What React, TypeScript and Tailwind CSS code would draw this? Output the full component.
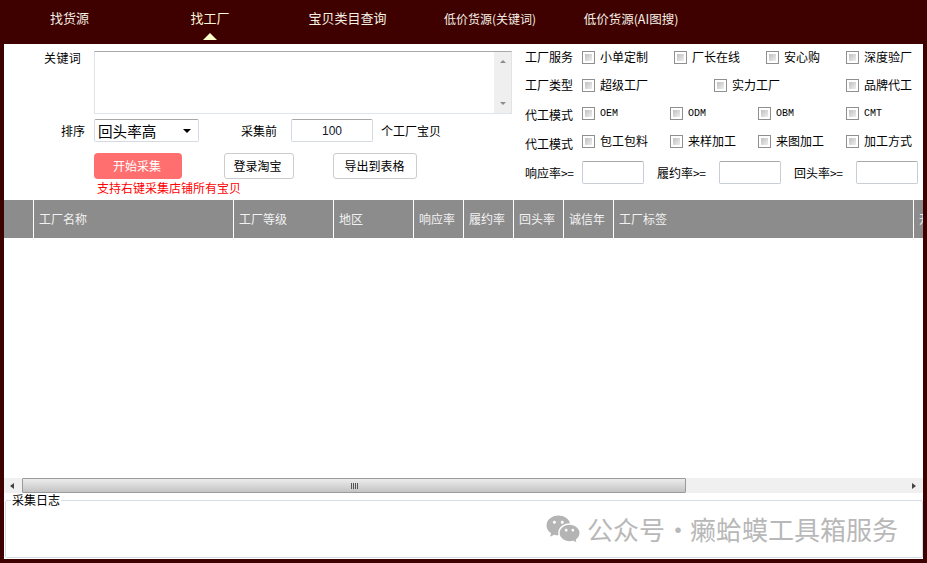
import { RiWechatFill } from "react-icons/ri";

const font = { fontFamily: '"Noto Sans CJK SC", "Liberation Sans", sans-serif' };

function Box() {
  return (
    <span className="w-[13px] h-[13px] shrink-0 border border-[#8e8f8f] bg-white p-[2px] flex">
      <span className="flex-1 bg-gradient-to-br from-[#c0c0c0] to-[#eeeeee]" />
    </span>
  );
}

function Check({ label, w, mono }: { label: string; w: string; mono?: boolean }) {
  return (
    <div className={`${w} flex items-center gap-[5px] shrink-0`}>
      <Box />
      <span className={mono ? "text-[10px] font-['Liberation_Mono']" : "text-[12px]"}>{label}</span>
    </div>
  );
}

function RowLabel({ children, cls = "" }: { children: string; cls?: string }) {
  return <span className={`w-[57px] shrink-0 text-[12px] ${cls}`}>{children}</span>;
}

function Rate({ label, w }: { label: string; w: string }) {
  return (
    <div className="flex items-center">
      <span className={`${w} shrink-0 text-[12px] whitespace-nowrap`}>
        {label}
        <span className="tracking-[-0.5px]">{">="}</span>
      </span>
      <div className="w-[62px] h-[23px] rounded-[2px] border border-[#c9ced6] border-t-[#a8a8a8] bg-white" />
    </div>
  );
}

const columns = [
  { w: "w-[30px]", t: "" },
  { w: "w-[200px]", t: "工厂名称" },
  { w: "w-[100px]", t: "工厂等级" },
  { w: "w-[80px]", t: "地区" },
  { w: "w-[50px]", t: "响应率" },
  { w: "w-[50px]", t: "履约率" },
  { w: "w-[50px]", t: "回头率" },
  { w: "w-[50px]", t: "诚信年" },
  { w: "w-[300px]", t: "工厂标签" },
  { w: "flex-1", t: "开" },
];

export default function App() {
  return (
    <div style={font} className="relative w-[927px] h-[563px] overflow-hidden bg-[#3f0000] text-black">
      <nav className="h-[44px] flex text-[13px] text-[#f4f0e4]">
        <div className="w-[139px] pt-[8px] text-center">找货源</div>
        <div className="w-[142px] pt-[8px] flex flex-col items-center">
          <span className="text-[#fff8d8]">找工厂</span>
          <span className="mt-[5px] w-0 h-0 border-l-[7px] border-r-[7px] border-b-[7px] border-l-transparent border-r-transparent border-b-[#ffffcc]" />
        </div>
        <div className="w-[133px] pt-[8px] text-center">宝贝类目查询</div>
        <div className="w-[152px] pt-[10px] text-center text-[12px]">低价货源(关键词)</div>
        <div className="w-[130px] pt-[10px] text-center text-[12.5px] leading-[18px]">低价货源(AI图搜)</div>
      </nav>

      <main className="mx-[4px] h-[515px] bg-white flex flex-col">
        <section className="h-[156px] flex">
          <div className="w-[521px] shrink-0 pt-[7px]">
            <div className="flex">
              <span className="w-[77px] text-right text-[12px] leading-[14px] tracking-[0.3px]">关键词</span>
              <div className="ml-[13px] w-[418px] h-[63px] border border-[#dfe3ea] border-t-[#a8a8a8] flex justify-end">
                <div className="w-[17px] bg-[#efefef] flex flex-col items-center justify-between py-[8px]">
                  <span className="w-0 h-0 border-l-[3px] border-r-[3px] border-b-[3px] border-l-transparent border-r-transparent border-b-[#8c8c8c]" />
                  <span className="w-0 h-0 border-l-[3px] border-r-[3px] border-t-[3px] border-l-transparent border-r-transparent border-t-[#8c8c8c]" />
                </div>
              </div>
            </div>
            <div className="mt-[5px] flex items-center h-[23px]">
              <span className="w-[81px] text-right text-[12px]">排序</span>
              <div className="ml-[9px] w-[105px] h-[23px] pl-[3px] pr-[7px] border border-[#d5dae2] border-t-[#a8a8a8] rounded-[2px] flex items-center justify-between text-[14.6px]">
                <span>回头率高</span>
                <span className="w-0 h-0 border-l-[4px] border-r-[4px] border-t-[4px] border-l-transparent border-r-transparent border-t-black" />
              </div>
              <span className="ml-[42px] text-[12px]">采集前</span>
              <div className="ml-[14px] w-[82px] h-[23px] border border-[#d5dae2] border-t-[#a8a8a8] rounded-[2px] flex items-center justify-center text-[12px] text-[#10182e] font-['Liberation_Sans']">100</div>
              <span className="ml-[8px] text-[12px]">个工厂宝贝</span>
            </div>
            <div className="mt-[11px] ml-[90px] flex items-center">
              <div className="w-[88px] h-[26px] pr-[2px] rounded-[4px] bg-[#ff6f6f] text-white text-[12px] flex items-center justify-center">开始采集</div>
              <div className="ml-[42px] w-[70px] h-[26px] pr-[3px] rounded-[3px] border border-[#cccccc] flex items-center justify-center text-[12px]">登录淘宝</div>
              <div className="ml-[39px] w-[84px] h-[26px] pr-[1px] rounded-[3px] border border-[#cccccc] flex items-center justify-center text-[12px]">导出到表格</div>
            </div>
            <div className="ml-[93px] mt-[1px] text-[12px] leading-[16px] text-[#ff0000]">支持右键采集店铺所有宝贝</div>
          </div>

          <div className="flex-1 pt-[6px] flex flex-col">
            <div className="h-[14px] flex items-center">
              <RowLabel>工厂服务</RowLabel>
              <Check label="小单定制" w="w-[92px]" />
              <Check label="厂长在线" w="w-[92px]" />
              <Check label="安心购" w="w-[80px]" />
              <Check label="深度验厂" w="w-[70px]" />
            </div>
            <div className="mt-[14px] h-[14px] flex items-center">
              <RowLabel>工厂类型</RowLabel>
              <Check label="超级工厂" w="w-[132px]" />
              <Check label="实力工厂" w="w-[132px]" />
              <Check label="品牌代工" w="w-[70px]" />
            </div>
            <div className="mt-[14px] h-[14px] flex items-center">
              <RowLabel cls="relative top-[2px]">代工模式</RowLabel>
              <Check label="OEM" w="w-[88px]" mono />
              <Check label="ODM" w="w-[88px]" mono />
              <Check label="OBM" w="w-[88px]" mono />
              <Check label="CMT" w="w-[70px]" mono />
            </div>
            <div className="mt-[14px] h-[14px] flex items-center">
              <RowLabel cls="relative top-[3px]">代工模式</RowLabel>
              <Check label="包工包料" w="w-[88px]" />
              <Check label="来样加工" w="w-[88px]" />
              <Check label="来图加工" w="w-[88px]" />
              <Check label="加工方式" w="w-[70px]" />
            </div>
            <div className="mt-[13px] flex items-center gap-[13px]">
              <Rate label="响应率" w="w-[57px]" />
              <Rate label="履约率" w="w-[62px]" />
              <Rate label="回头率" w="w-[62px]" />
            </div>
          </div>
        </section>

        <div className="h-[38px] flex shrink-0 overflow-hidden">
          {columns.map((c, i) => (
            <div
              key={i}
              className={`${c.w} shrink-0 h-full bg-[#8c8c8c] border-r border-white pl-[5px] flex items-center text-[12px] text-[#f2f2f2] whitespace-nowrap overflow-hidden last:border-r-0`}
            >
              {c.t}
            </div>
          ))}
        </div>

        <div className="h-[240px] shrink-0 bg-white" />

        <div className="h-[15px] shrink-0 bg-[#f0f0f0] flex items-center relative">
          <span className="ml-[6px] w-0 h-0 border-t-[3px] border-b-[3px] border-r-[4px] border-t-transparent border-b-transparent border-r-[#444]" />
          <div className="ml-[8px] w-[664px] h-[15px] border border-[#9a9a9a] rounded-[1px] bg-gradient-to-b from-[#ececec] to-[#c4c4c4] flex items-center justify-center gap-[1px]">
            <span className="w-[1px] h-[6px] bg-[#555]" />
            <span className="w-[1px] h-[6px] bg-[#555]" />
            <span className="w-[1px] h-[6px] bg-[#555]" />
            <span className="w-[1px] h-[6px] bg-[#555]" />
          </div>
          <span className="ml-auto mr-[7px] w-0 h-0 border-t-[3px] border-b-[3px] border-l-[4px] border-t-transparent border-b-transparent border-l-[#444]" />
        </div>

        <fieldset className="mt-[1px] ml-[1px] h-[64px] border border-[#d5dee8] rounded-[2px] px-[5px]">
          <legend className="text-[12px] leading-[12px] px-[1px]">采集日志</legend>
        </fieldset>
      </main>

      <div className="absolute left-[545px] top-[511px] flex items-center gap-[6px] text-[#b8b8b8] text-[26px] leading-[30px] font-['Noto_Sans_CJK_SC']">
        <RiWechatFill className="w-[36px] h-[36px] text-[#b4b4b4]" />
        <span className="whitespace-nowrap">
          公众号
          <span className="inline-block w-[25px] text-center">·</span>
          癞蛤蟆工具箱服务
        </span>
      </div>
    </div>
  );
}
